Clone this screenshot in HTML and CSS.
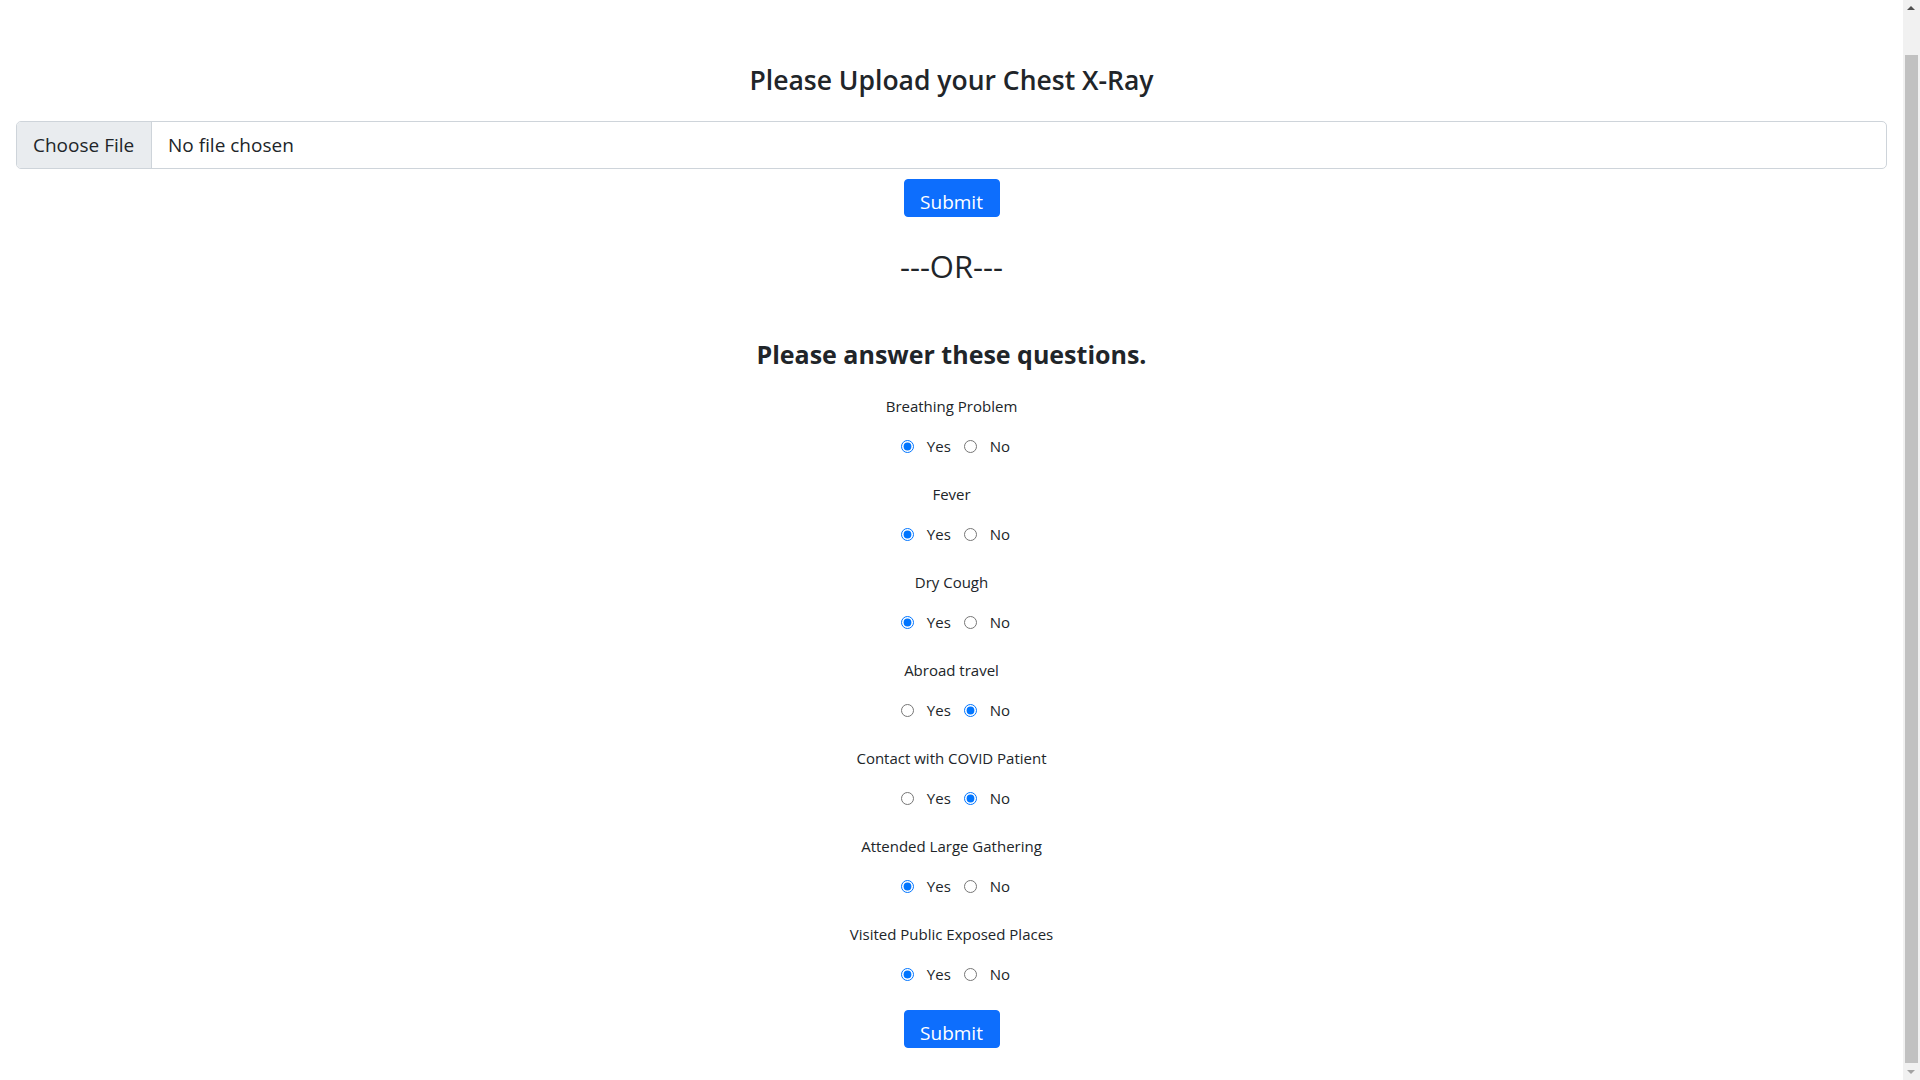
FILE: index.html
```html
<!DOCTYPE html>
<html lang="en">
<head>
<meta charset="utf-8">
<title>COVID Detection</title>
<link rel="stylesheet" href="styles.css">
</head>
<body>
<main class="page">
  <h4 class="title">Please Upload your Chest X-Ray</h4>
  <div class="file-input">
    <span class="file-btn">Choose File</span>
    <span class="file-name">No file chosen</span>
  </div>
  <div class="btn-row"><button class="btn" type="button">Submit</button></div>
  <h3 class="or">---OR---</h3>
  <h3 class="questions-title">Please answer these questions.</h3>
  <form class="questions">
    <div class="q">
      <div class="q-label">Breathing Problem</div>
      <div class="q-opts"><input type="radio" name="q1" checked><span>Yes</span><input type="radio" name="q1"><span>No</span></div>
    </div>
    <div class="q">
      <div class="q-label">Fever</div>
      <div class="q-opts"><input type="radio" name="q2" checked><span>Yes</span><input type="radio" name="q2"><span>No</span></div>
    </div>
    <div class="q">
      <div class="q-label">Dry Cough</div>
      <div class="q-opts"><input type="radio" name="q3" checked><span>Yes</span><input type="radio" name="q3"><span>No</span></div>
    </div>
    <div class="q">
      <div class="q-label">Abroad travel</div>
      <div class="q-opts"><input type="radio" name="q4"><span>Yes</span><input type="radio" name="q4" checked><span>No</span></div>
    </div>
    <div class="q">
      <div class="q-label">Contact with COVID Patient</div>
      <div class="q-opts"><input type="radio" name="q5"><span>Yes</span><input type="radio" name="q5" checked><span>No</span></div>
    </div>
    <div class="q">
      <div class="q-label">Attended Large Gathering</div>
      <div class="q-opts"><input type="radio" name="q6" checked><span>Yes</span><input type="radio" name="q6"><span>No</span></div>
    </div>
    <div class="q">
      <div class="q-label">Visited Public Exposed Places</div>
      <div class="q-opts"><input type="radio" name="q7" checked><span>Yes</span><input type="radio" name="q7"><span>No</span></div>
    </div>
    <div class="btn-row btn-row-last"><button class="btn" type="button">Submit</button></div>
  </form>
</main>
<div class="scrollbar" aria-hidden="true">
  <span class="sb-arrow sb-up"></span>
  <span class="sb-thumb"></span>
  <span class="sb-arrow sb-down"></span>
</div>
<script src="script.js"></script>
</body>
</html>
```
FILE: styles.css
```css
body {
  margin: 0;
  font-family: "Open Sans", "Noto Sans", sans-serif;
  font-size: 16px;
  color: #212529;
  background: #fff;
}
.page {
  margin-right: 17px;
  padding: 102px 16px 32px;
  text-align: center;
}
.title {
  margin: 0 0 24px;
  font-size: 26.5px;
  line-height: 34px;
  font-weight: 600;
}
.file-input {
  display: flex;
  height: 48px;
  box-sizing: border-box;
  border: 1px solid #ced4da;
  border-radius: 5px;
  overflow: hidden;
  font-size: 19px;
  text-align: left;
  align-items: stretch;
}
.file-btn {
  display: flex;
  align-items: center;
  padding: 0 0 0 16px;
  width: 135px;
  flex: none;
  white-space: nowrap;
  font-size: 19px;
  box-sizing: border-box;
  background: #e9ecef;
  border-right: 1px solid #ced4da;
}
.file-name {
  display: flex;
  align-items: center;
  padding-left: 16px;
  white-space: nowrap;
}
.btn-row {
  display: flex;
  justify-content: center;
  margin-top: 10px;
}
.btn {
  width: 96px;
  height: 38px;
  box-sizing: border-box;
  border: 1px solid #0d6efd;
  border-radius: 4px;
  background: #0d6efd;
  color: #fff;
  font-family: inherit;
  font-size: 19px;
  line-height: 26px;
  padding: 9px 0 1px;
  cursor: pointer;
}
.or {
  margin: 32px 0 0;
  font-size: 31px;
  line-height: 34px;
  font-weight: 400;
}
.questions-title {
  margin: 54px 0 0;
  font-size: 25px;
  line-height: 34px;
  font-weight: 700;
}
.questions {
  margin-top: 23px;
}
.q { margin-bottom: 24px; }
.q-label {
  font-size: 15px;
  line-height: 24px;
}
.q-opts {
  margin-top: 16px;
  display: flex;
  justify-content: center;
  align-items: center;
  gap: 13px;
  padding-left: 8px;
  font-size: 15px;
  line-height: 24px;
}
.q-opts input {
  margin: 0;
  width: 13px;
  height: 13px;
}
.btn-row-last { margin-top: 0; }

.scrollbar {
  position: fixed;
  top: 0;
  right: 0;
  width: 17px;
  height: 100vh;
  background: #f1f1f1;
}
.sb-thumb {
  position: absolute;
  top: 55px;
  left: 2px;
  width: 13px;
  height: 1008px;
  background: #c1c1c1;
}
.sb-arrow {
  position: absolute;
  left: 4px;
  width: 0;
  height: 0;
  border-left: 4px solid transparent;
  border-right: 4px solid transparent;
}
.sb-up {
  top: 6px;
  border-bottom: 4px solid #505050;
}
.sb-down {
  bottom: 6px;
  border-top: 4px solid #a3a3a3;
}
```
FILE: script.js
```js
window.scrollTo(0, document.documentElement.scrollHeight);
```
